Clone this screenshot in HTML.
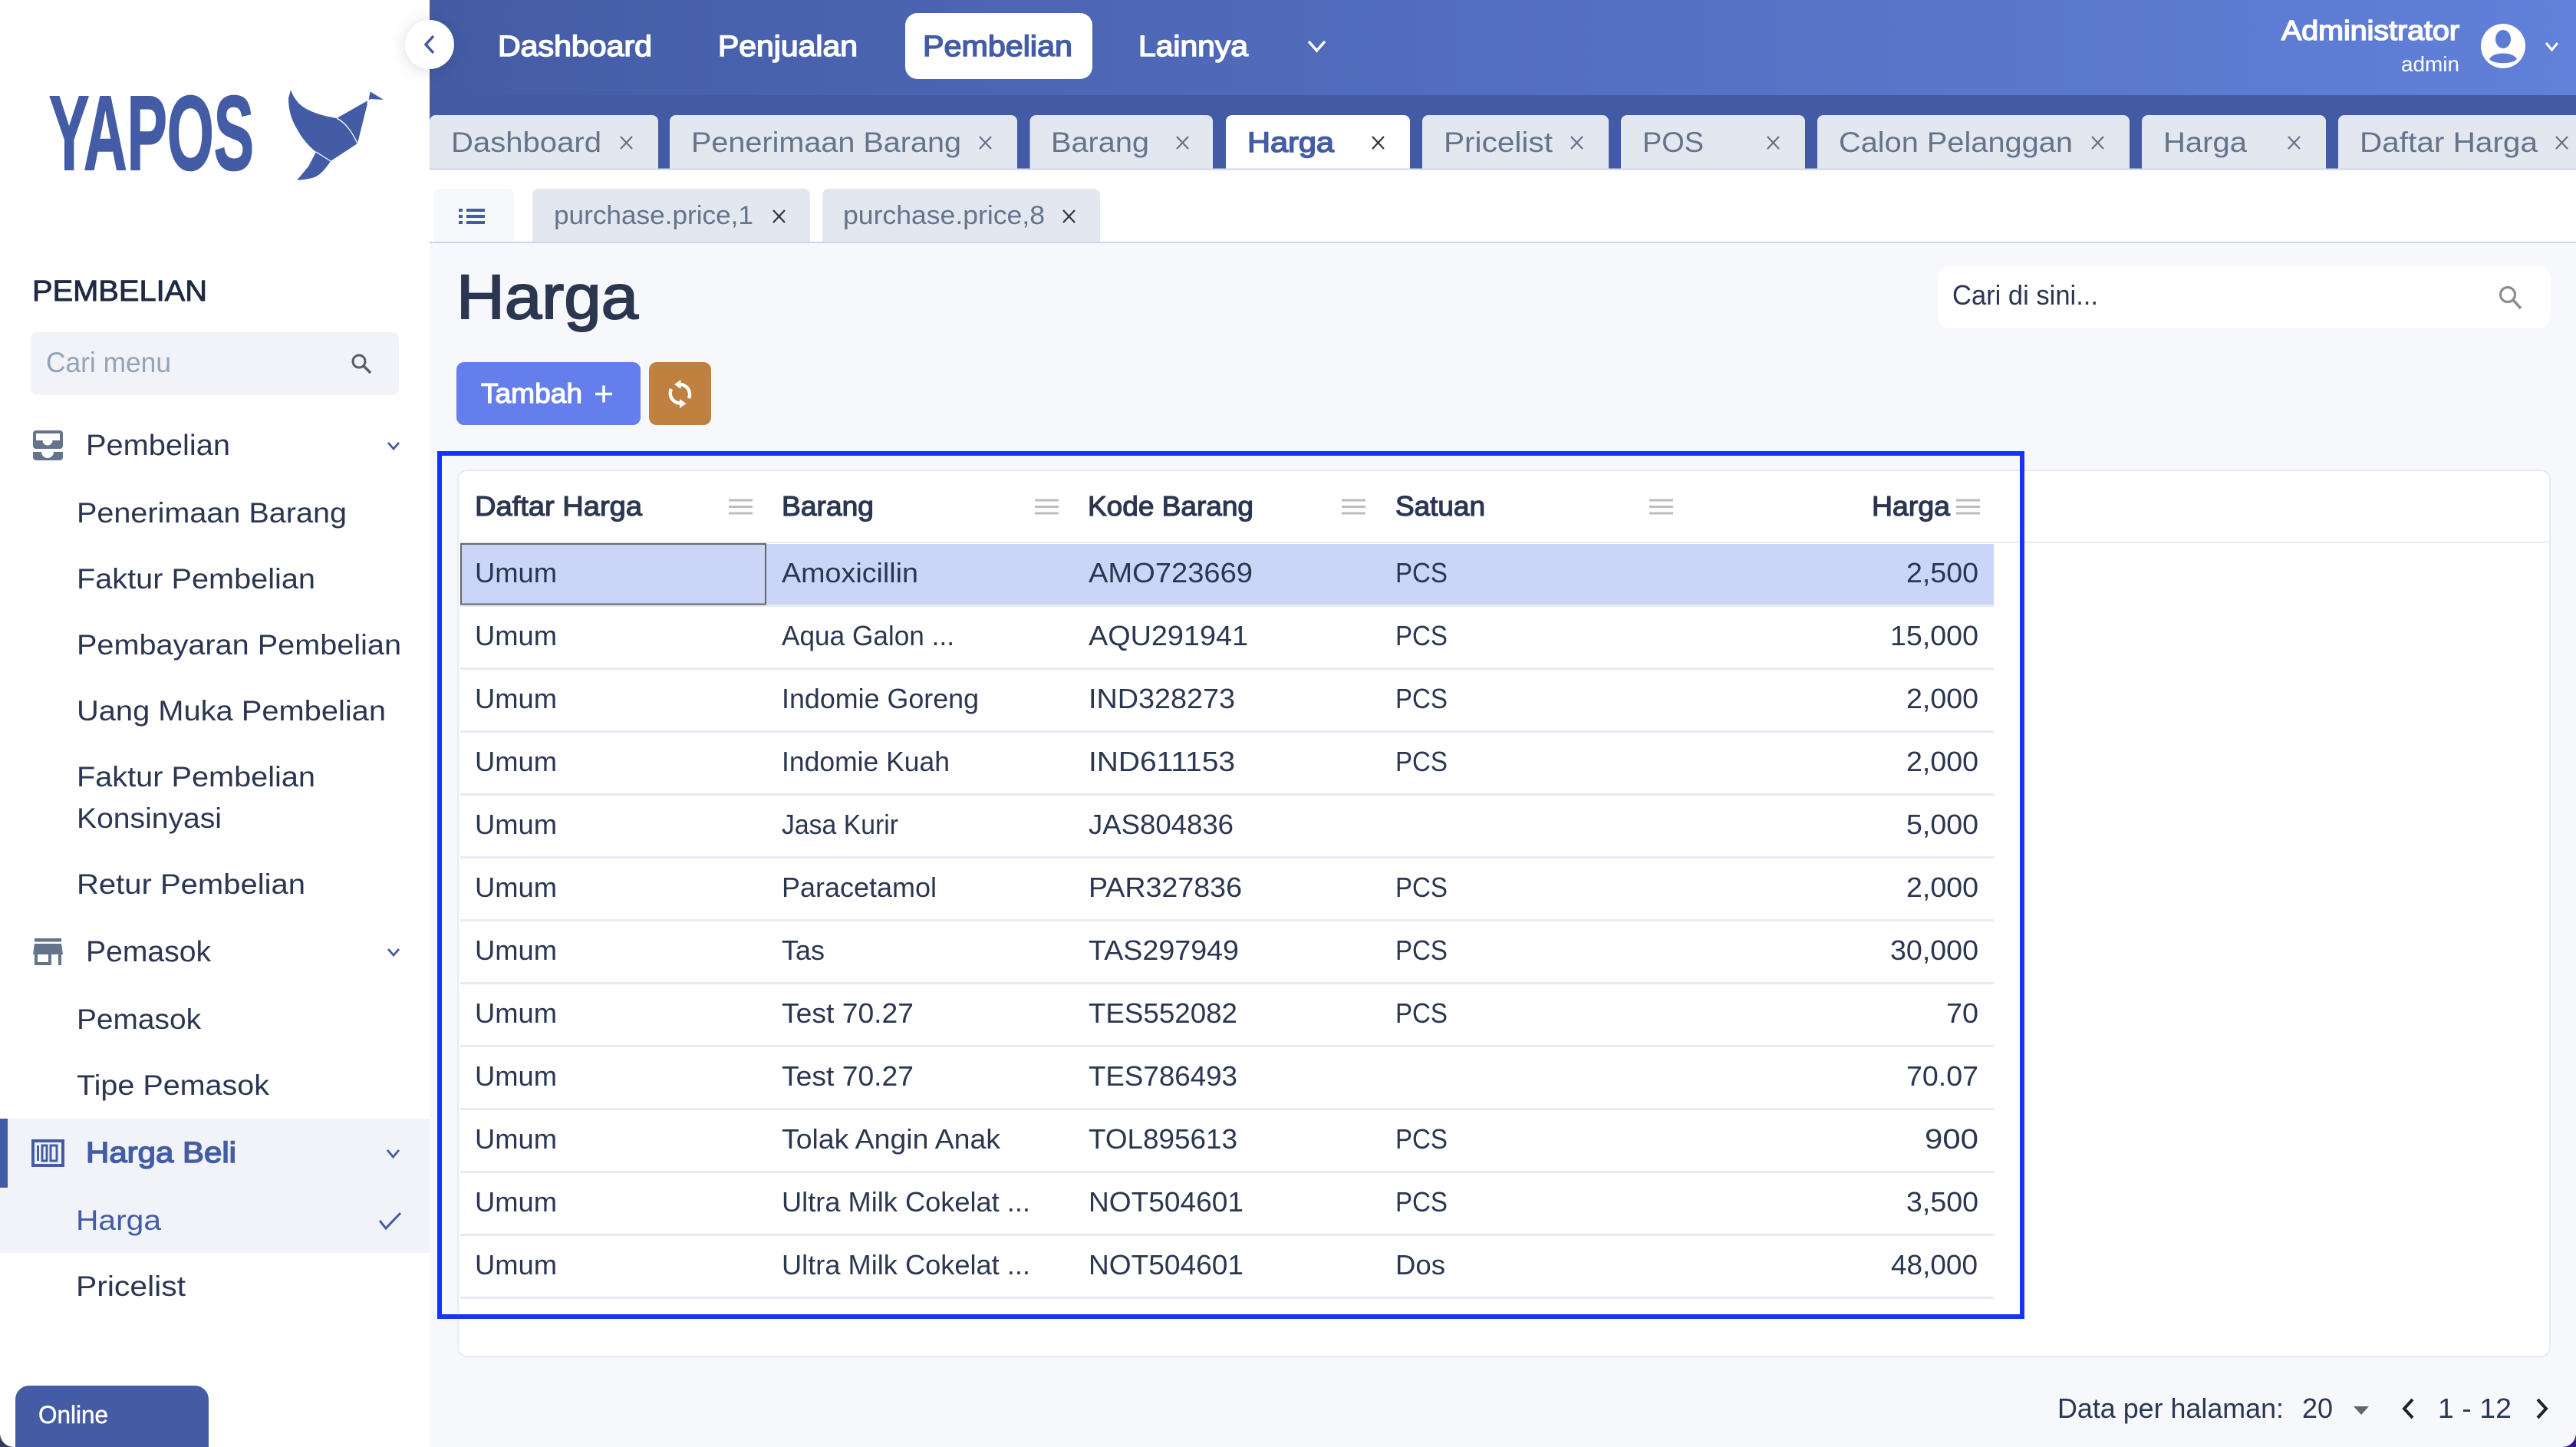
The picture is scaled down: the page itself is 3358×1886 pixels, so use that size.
<!DOCTYPE html>
<html><head><meta charset="utf-8"><title>Harga</title>
<style>
html,body{margin:0;padding:0;background:#f6f8fc;width:3358px;height:1886px;overflow:hidden}
svg{display:block}
text{font-family:"Liberation Sans",sans-serif;white-space:pre}
.b{font-size:36px;fill:#2b3650}
.h{font-size:36px;fill:#2b3650;stroke:#2b3650;stroke-width:1.200px}
.m{font-size:37px;fill:#2b3650}
.t{font-size:37px;fill:#64748b}
.s{font-size:34px;fill:#64748b}
.n{font-size:38px;fill:#fff;stroke:#fff;stroke-width:1.500px}
.a{fill:#435ca5;stroke:#435ca5;stroke-width:1.500px}
</style></head>
<body>
<svg xmlns="http://www.w3.org/2000/svg" width="3358" height="1886" viewBox="0 0 3358 1886">
<defs>
<linearGradient id="g" x1="560" y1="0" x2="3358" y2="0" gradientUnits="userSpaceOnUse"><stop offset="0" stop-color="#445ca5"/><stop offset="1" stop-color="#6180d9"/></linearGradient>
<path id="x" d="M0 0L15 16M15 0L0 16" fill="none" stroke-width="2.200"/>
<path id="c" d="M0 0L31 0M0 8.500L31 8.500M0 17L31 17" fill="none" stroke="#bdbdbd" stroke-width="3"/>
</defs>

<rect width="3358" height="1886" fill="#f6f8fc"/>

<!-- top bar -->
<rect x="560" y="0" width="2798" height="124" fill="url(#g)"/>
<rect x="560" y="124" width="2798" height="96" fill="#435ba4"/>

<text x="649" y="73" class="n" textLength="201" lengthAdjust="spacingAndGlyphs">Dashboard</text>
<text x="936" y="73" class="n" textLength="182" lengthAdjust="spacingAndGlyphs">Penjualan</text>
<rect x="1180" y="17" width="244" height="86" rx="16" fill="#fff"/>
<text x="1203" y="73" style="font-size:38px" class="a" textLength="195" lengthAdjust="spacingAndGlyphs">Pembelian</text>
<text x="1484" y="73" class="n" textLength="143" lengthAdjust="spacingAndGlyphs">Lainnya</text>
<path d="M1706 54L1716.500 66L1727 54" fill="none" stroke="#fff" stroke-width="3.500"/>

<text x="2974" y="52" class="n" style="font-size:36px" textLength="232" lengthAdjust="spacingAndGlyphs">Administrator</text>
<text x="3130" y="93" style="font-size:28px" fill="#fff" textLength="76" lengthAdjust="spacingAndGlyphs">admin</text>
<circle cx="3263" cy="60" r="29" fill="#fff"/>
<ellipse cx="3263" cy="51" rx="10" ry="12" fill="#5e7bd3"/>
<path d="M3245 77C3250 67 3276 67 3281 77C3276 84 3250 84 3245 77Z" fill="#5e7bd3"/>
<path d="M3319 56L3326.500 65L3334 56" fill="none" stroke="#fff" stroke-width="3"/>

<!-- tabs -->
<g fill="#e2e7f0">
<rect x="560" y="150" width="298" height="80" rx="8"/>
<rect x="873" y="150" width="453" height="80" rx="8"/>
<rect x="1342.500" y="150" width="238.500" height="80" rx="8"/>
<rect x="1598" y="150" width="240" height="80" rx="8" fill="#fff"/>
<rect x="1854" y="150" width="243" height="80" rx="8"/>
<rect x="2113" y="150" width="240" height="80" rx="8"/>
<rect x="2369" y="150" width="407" height="80" rx="8"/>
<rect x="2792" y="150" width="240" height="80" rx="8"/>
<rect x="3048" y="150" width="330" height="80" rx="8"/>
</g>
<g class="t">
<text x="588" y="198" class="t" textLength="196" lengthAdjust="spacingAndGlyphs">Dashboard</text>
<text x="901" y="198" class="t" textLength="352" lengthAdjust="spacingAndGlyphs">Penerimaan Barang</text>
<text x="1370" y="198" class="t" textLength="128" lengthAdjust="spacingAndGlyphs">Barang</text>
<text x="1626" y="198" style="font-size:37px" class="a" textLength="113" lengthAdjust="spacingAndGlyphs">Harga</text>
<text x="1882" y="198" class="t" textLength="142" lengthAdjust="spacingAndGlyphs">Pricelist</text>
<text x="2141" y="198" class="t" textLength="80" lengthAdjust="spacingAndGlyphs">POS</text>
<text x="2397" y="198" class="t" textLength="305" lengthAdjust="spacingAndGlyphs">Calon Pelanggan</text>
<text x="2820" y="198" class="t" textLength="109" lengthAdjust="spacingAndGlyphs">Harga</text>
<text x="3076" y="198" class="t" textLength="232" lengthAdjust="spacingAndGlyphs">Daftar Harga</text>
</g>
<g stroke="#64748b">
<use href="#x" x="809" y="178"/>
<use href="#x" x="1277" y="178"/>
<use href="#x" x="1534" y="178"/>
<use href="#x" x="1789" y="178" stroke="#2f3542"/>
<use href="#x" x="2048" y="178"/>
<use href="#x" x="2304" y="178"/>
<use href="#x" x="2727" y="178"/>
<use href="#x" x="2983" y="178"/>
<use href="#x" x="3332" y="178"/>
</g>

<!-- second row -->
<rect x="560" y="220" width="2798" height="96" fill="#fff"/>
<rect x="560" y="219.500" width="2798" height="2" fill="#cdd6ea"/>
<rect x="565" y="246" width="105" height="80" rx="8" fill="#f6f8fc"/>
<rect x="694" y="246" width="362" height="80" rx="8" fill="#e2e7f0"/>
<rect x="1072" y="246" width="362" height="80" rx="8" fill="#e2e7f0"/>
<rect x="560" y="316" width="2798" height="1570" fill="#f6f8fc"/>
<rect x="560" y="315" width="2798" height="2" fill="#cdd6ea"/>
<g fill="#435ca5">
<rect x="598" y="272" width="5" height="4"/><rect x="608" y="272" width="24" height="4"/>
<rect x="598" y="280" width="5" height="4"/><rect x="608" y="280" width="24" height="4"/>
<rect x="598" y="288" width="5" height="4"/><rect x="608" y="288" width="24" height="4"/>
</g>
<text x="722" y="292" class="s" textLength="260" lengthAdjust="spacingAndGlyphs">purchase.price,1</text>
<text x="1099" y="292" class="s" textLength="263" lengthAdjust="spacingAndGlyphs">purchase.price,8</text>
<g stroke="#2f3542">
<use href="#x" x="1008" y="274"/>
<use href="#x" x="1386" y="274"/>
</g>

<!-- title and buttons -->
<text x="595" y="415" style="font-size:82px" fill="#2b3650" stroke="#2b3650" stroke-width="2" textLength="237" lengthAdjust="spacingAndGlyphs">Harga</text>
<rect x="2526" y="347" width="799" height="81" rx="16" fill="#fff"/>
<text x="2545" y="397" class="b" textLength="190" lengthAdjust="spacingAndGlyphs">Cari di sini...</text>
<circle cx="3269" cy="384" r="9.500" fill="none" stroke="#8c8c8c" stroke-width="3.200"/>
<path d="M3276 391L3286 402" stroke="#8c8c8c" stroke-width="3.600"/>

<rect x="595" y="472" width="240" height="82" rx="10" fill="#647eec"/>
<text x="627" y="525" style="font-size:36px" fill="#fff" stroke="#fff" stroke-width="1.200" textLength="132" lengthAdjust="spacingAndGlyphs">Tambah</text>
<path d="M776 513.500H798M787 502.500V524.500" stroke="#fff" stroke-width="3.600"/>
<rect x="846" y="472" width="81" height="82" rx="10" fill="#c08040"/>
<g fill="none" stroke="#fff" stroke-width="4.500">
<path d="M886 501A13 13 0 0 1 898 519"/>
<path d="M887 525.500A13 13 0 0 1 875 507"/>
</g>
<path d="M879 501L887.500 495V507Z M894.500 526L886 520V532Z" fill="#fff"/>

<!-- card -->
<rect x="597" y="613" width="2727" height="1155" rx="12" fill="#fff" stroke="#e8ebf3" stroke-width="2"/>
<rect x="597" y="706" width="2727" height="2" fill="#e8ebf3"/>
<text x="619" y="672" class="h" textLength="218" lengthAdjust="spacingAndGlyphs">Daftar Harga</text>
<text x="1019" y="672" class="h" textLength="120" lengthAdjust="spacingAndGlyphs">Barang</text>
<text x="1418" y="672" class="h" textLength="216" lengthAdjust="spacingAndGlyphs">Kode Barang</text>
<text x="1819" y="672" class="h" textLength="117" lengthAdjust="spacingAndGlyphs">Satuan</text>
<text x="2440" y="672" class="h" textLength="102" lengthAdjust="spacingAndGlyphs">Harga</text>
<use href="#c" x="950" y="652"/><use href="#c" x="1349" y="652"/><use href="#c" x="1749" y="652"/><use href="#c" x="2150" y="652"/><use href="#c" x="2550" y="652"/>

<rect x="600" y="709" width="1999" height="79" fill="#cbd5f7"/>
<g fill="#e8ebf3">
<rect x="600" y="788" width="1999" height="3"/>
<rect x="600" y="870" width="1999" height="3"/>
<rect x="600" y="952" width="1999" height="3"/>
<rect x="600" y="1034" width="1999" height="3"/>
<rect x="600" y="1116" width="1999" height="3"/>
<rect x="600" y="1198" width="1999" height="3"/>
<rect x="600" y="1280" width="1999" height="3"/>
<rect x="600" y="1362" width="1999" height="3"/>
<rect x="600" y="1444" width="1999" height="3"/>
<rect x="600" y="1526" width="1999" height="3"/>
<rect x="600" y="1608" width="1999" height="3"/>
<rect x="600" y="1690" width="1999" height="3"/>
</g>
<rect x="601" y="709" width="397" height="78.500" fill="none" stroke="#66676e" stroke-width="2"/>

<!-- rows -->
<text x="619" y="759" class="b" textLength="107" lengthAdjust="spacingAndGlyphs">Umum</text>
<text x="1019" y="759" class="b" textLength="178" lengthAdjust="spacingAndGlyphs">Amoxicillin</text>
<text x="1419" y="759" class="b" textLength="214" lengthAdjust="spacingAndGlyphs">AMO723669</text>
<text x="1819" y="759" class="b" textLength="68" lengthAdjust="spacingAndGlyphs">PCS</text>
<text x="2485" y="759" class="b" textLength="94" lengthAdjust="spacingAndGlyphs">2,500</text>

<text x="619" y="841" class="b" textLength="107" lengthAdjust="spacingAndGlyphs">Umum</text>
<text x="1019" y="841" class="b" textLength="225" lengthAdjust="spacingAndGlyphs">Aqua Galon ...</text>
<text x="1419" y="841" class="b" textLength="208" lengthAdjust="spacingAndGlyphs">AQU291941</text>
<text x="1819" y="841" class="b" textLength="68" lengthAdjust="spacingAndGlyphs">PCS</text>
<text x="2464" y="841" class="b" textLength="115" lengthAdjust="spacingAndGlyphs">15,000</text>

<text x="619" y="923" class="b" textLength="107" lengthAdjust="spacingAndGlyphs">Umum</text>
<text x="1019" y="923" class="b" textLength="257" lengthAdjust="spacingAndGlyphs">Indomie Goreng</text>
<text x="1419" y="923" class="b" textLength="191" lengthAdjust="spacingAndGlyphs">IND328273</text>
<text x="1819" y="923" class="b" textLength="68" lengthAdjust="spacingAndGlyphs">PCS</text>
<text x="2485" y="923" class="b" textLength="94" lengthAdjust="spacingAndGlyphs">2,000</text>

<text x="619" y="1005" class="b" textLength="107" lengthAdjust="spacingAndGlyphs">Umum</text>
<text x="1019" y="1005" class="b" textLength="219" lengthAdjust="spacingAndGlyphs">Indomie Kuah</text>
<text x="1419" y="1005" class="b" textLength="191" lengthAdjust="spacingAndGlyphs">IND611153</text>
<text x="1819" y="1005" class="b" textLength="68" lengthAdjust="spacingAndGlyphs">PCS</text>
<text x="2485" y="1005" class="b" textLength="94" lengthAdjust="spacingAndGlyphs">2,000</text>

<text x="619" y="1087" class="b" textLength="107" lengthAdjust="spacingAndGlyphs">Umum</text>
<text x="1019" y="1087" class="b" textLength="152" lengthAdjust="spacingAndGlyphs">Jasa Kurir</text>
<text x="1419" y="1087" class="b" textLength="189" lengthAdjust="spacingAndGlyphs">JAS804836</text>
<text x="2485" y="1087" class="b" textLength="94" lengthAdjust="spacingAndGlyphs">5,000</text>

<text x="619" y="1169" class="b" textLength="107" lengthAdjust="spacingAndGlyphs">Umum</text>
<text x="1019" y="1169" class="b" textLength="202" lengthAdjust="spacingAndGlyphs">Paracetamol</text>
<text x="1419" y="1169" class="b" textLength="200" lengthAdjust="spacingAndGlyphs">PAR327836</text>
<text x="1819" y="1169" class="b" textLength="68" lengthAdjust="spacingAndGlyphs">PCS</text>
<text x="2485" y="1169" class="b" textLength="94" lengthAdjust="spacingAndGlyphs">2,000</text>

<text x="619" y="1251" class="b" textLength="107" lengthAdjust="spacingAndGlyphs">Umum</text>
<text x="1019" y="1251" class="b" textLength="56" lengthAdjust="spacingAndGlyphs">Tas</text>
<text x="1419" y="1251" class="b" textLength="196" lengthAdjust="spacingAndGlyphs">TAS297949</text>
<text x="1819" y="1251" class="b" textLength="68" lengthAdjust="spacingAndGlyphs">PCS</text>
<text x="2464" y="1251" class="b" textLength="115" lengthAdjust="spacingAndGlyphs">30,000</text>

<text x="619" y="1333" class="b" textLength="107" lengthAdjust="spacingAndGlyphs">Umum</text>
<text x="1019" y="1333" class="b" textLength="172" lengthAdjust="spacingAndGlyphs">Test 70.27</text>
<text x="1419" y="1333" class="b" textLength="194" lengthAdjust="spacingAndGlyphs">TES552082</text>
<text x="1819" y="1333" class="b" textLength="68" lengthAdjust="spacingAndGlyphs">PCS</text>
<text x="2537" y="1333" class="b" textLength="42" lengthAdjust="spacingAndGlyphs">70</text>

<text x="619" y="1415" class="b" textLength="107" lengthAdjust="spacingAndGlyphs">Umum</text>
<text x="1019" y="1415" class="b" textLength="172" lengthAdjust="spacingAndGlyphs">Test 70.27</text>
<text x="1419" y="1415" class="b" textLength="194" lengthAdjust="spacingAndGlyphs">TES786493</text>
<text x="2485" y="1415" class="b" textLength="94" lengthAdjust="spacingAndGlyphs">70.07</text>

<text x="619" y="1497" class="b" textLength="107" lengthAdjust="spacingAndGlyphs">Umum</text>
<text x="1019" y="1497" class="b" textLength="285" lengthAdjust="spacingAndGlyphs">Tolak Angin Anak</text>
<text x="1419" y="1497" class="b" textLength="194" lengthAdjust="spacingAndGlyphs">TOL895613</text>
<text x="1819" y="1497" class="b" textLength="68" lengthAdjust="spacingAndGlyphs">PCS</text>
<text x="2509" y="1497" class="b" textLength="70" lengthAdjust="spacingAndGlyphs">900</text>

<text x="619" y="1579" class="b" textLength="107" lengthAdjust="spacingAndGlyphs">Umum</text>
<text x="1019" y="1579" class="b" textLength="324" lengthAdjust="spacingAndGlyphs">Ultra Milk Cokelat ...</text>
<text x="1419" y="1579" class="b" textLength="202" lengthAdjust="spacingAndGlyphs">NOT504601</text>
<text x="1819" y="1579" class="b" textLength="68" lengthAdjust="spacingAndGlyphs">PCS</text>
<text x="2485" y="1579" class="b" textLength="94" lengthAdjust="spacingAndGlyphs">3,500</text>

<text x="619" y="1661" class="b" textLength="107" lengthAdjust="spacingAndGlyphs">Umum</text>
<text x="1019" y="1661" class="b" textLength="324" lengthAdjust="spacingAndGlyphs">Ultra Milk Cokelat ...</text>
<text x="1419" y="1661" class="b" textLength="202" lengthAdjust="spacingAndGlyphs">NOT504601</text>
<text x="1819" y="1661" class="b" textLength="65" lengthAdjust="spacingAndGlyphs">Dos</text>
<text x="2465" y="1661" class="b" textLength="113" lengthAdjust="spacingAndGlyphs">48,000</text>

<!-- highlight rectangle -->
<rect x="573" y="591" width="2063" height="1125" fill="none" stroke="#1434f8" stroke-width="6"/>

<!-- pagination -->
<text x="2682" y="1848" class="b" textLength="295" lengthAdjust="spacingAndGlyphs">Data per halaman:</text>
<text x="3001" y="1848" class="b" textLength="40" lengthAdjust="spacingAndGlyphs">20</text>
<path d="M3068 1833H3088L3078 1844Z" fill="#666"/>
<path d="M3145 1824L3134 1836L3145 1848" fill="none" stroke="#222" stroke-width="4"/>
<text x="3178" y="1848" class="b" textLength="96" lengthAdjust="spacingAndGlyphs">1 - 12</text>
<path d="M3308 1824L3319 1836L3308 1848" fill="none" stroke="#222" stroke-width="4"/>

<!-- sidebar -->
<rect x="0" y="0" width="560" height="1886" fill="#fff"/>
<circle cx="560" cy="58" r="32" fill="#fff" style="filter:drop-shadow(0 2px 10px rgba(0,0,0,.14))"/>
<path d="M565 47L555 58L565 69" fill="none" stroke="#435ca5" stroke-width="3.500"/>

<!-- logo -->
<text x="64" y="221" style="font-size:138px;font-weight:bold" fill="#435ca5" stroke="#435ca5" stroke-width="2" textLength="267" lengthAdjust="spacingAndGlyphs">YAPOS</text>
<path d="M379 117L376 128C376 145 381 158 387 168C394 181 403 191 412 198L402 217L387 235C397 234 404 233 410 231C417 228 423 222 431 210L466 187L479 135L482 119L500 130L483 129L439 154C425 152 399 146 388 133C384 128 381 123 379 117Z" fill="#435ca5"/>
<path d="M439 154C450 160 458 170 466 187M412 198L431 210M479 135L482 119" fill="none" stroke="#fff" stroke-width="1.300"/>

<text x="42" y="392" style="font-size:38px" fill="#1f2a44" stroke="#1f2a44" stroke-width=".9" textLength="228" lengthAdjust="spacingAndGlyphs">PEMBELIAN</text>
<rect x="40" y="433" width="480" height="82" rx="8" fill="#f1f3f8"/>
<text x="60" y="485" class="m" style="fill:#94a3b8" textLength="163" lengthAdjust="spacingAndGlyphs">Cari menu</text>
<circle cx="468" cy="471" r="8" fill="none" stroke="#555c68" stroke-width="3"/>
<path d="M474 477L483 486" stroke="#555c68" stroke-width="3.400"/>

<!-- inbox icon -->
<path fill-rule="evenodd" fill="#64748b" d="M47 561H78A4 4 0 0 1 82 565V581A4 4 0 0 1 78 585H47A4 4 0 0 1 43 581V565A4 4 0 0 1 47 561ZM47 565V574H55.500A6.500 6.500 0 0 0 68.500 574H78V565Z"/>
<path fill="#64748b" d="M43 589H54A8 8 0 0 0 70 589H82V596A4 4 0 0 1 78 600H47A4 4 0 0 1 43 596Z"/>
<text x="112" y="593" class="m" style="font-size:38px" textLength="188" lengthAdjust="spacingAndGlyphs">Pembelian</text>
<path d="M506 577L513 585L520 577" fill="none" stroke="#435ca5" stroke-width="2.800"/>

<text x="100" y="681" class="m" textLength="352" lengthAdjust="spacingAndGlyphs">Penerimaan Barang</text>
<text x="100" y="767" class="m" textLength="311" lengthAdjust="spacingAndGlyphs">Faktur Pembelian</text>
<text x="100" y="853" class="m" textLength="423" lengthAdjust="spacingAndGlyphs">Pembayaran Pembelian</text>
<text x="100" y="939" class="m" textLength="403" lengthAdjust="spacingAndGlyphs">Uang Muka Pembelian</text>
<text x="100" y="1025" class="m" textLength="311" lengthAdjust="spacingAndGlyphs">Faktur Pembelian</text>
<text x="100" y="1079" class="m" textLength="189" lengthAdjust="spacingAndGlyphs">Konsinyasi</text>
<text x="100" y="1165" class="m" textLength="298" lengthAdjust="spacingAndGlyphs">Retur Pembelian</text>

<!-- store icon -->
<g fill="#64748b">
<rect x="45" y="1223" width="35" height="4.500"/>
<path d="M45 1230H80L82 1244H43Z"/>
<path fill-rule="evenodd" d="M45 1244H67V1258H45ZM49 1244V1254H63V1244Z"/>
<rect x="76" y="1244" width="4" height="14"/>
</g>
<text x="112" y="1253" class="m" style="font-size:38px" textLength="163" lengthAdjust="spacingAndGlyphs">Pemasok</text>
<path d="M506 1237L513 1245L520 1237" fill="none" stroke="#435ca5" stroke-width="2.800"/>
<text x="100" y="1341" class="m" textLength="162" lengthAdjust="spacingAndGlyphs">Pemasok</text>
<text x="100" y="1427" class="m" textLength="251" lengthAdjust="spacingAndGlyphs">Tipe Pemasok</text>

<rect x="0" y="1458" width="560" height="175" fill="#f1f3f9"/>
<rect x="0" y="1458" width="10" height="90" fill="#425ba4"/>
<rect x="43" y="1487" width="39" height="32" fill="none" stroke="#435ca5" stroke-width="4"/>
<path d="M49.500 1493V1513M55 1493H61V1513H55ZM66 1493H74V1513H66Z" fill="none" stroke="#435ca5" stroke-width="3"/>
<text x="112" y="1515" style="font-size:38px" class="a" textLength="196" lengthAdjust="spacingAndGlyphs">Harga Beli</text>
<path d="M505 1499L512.500 1508L520 1499" fill="none" stroke="#435ca5" stroke-width="2.800"/>
<text x="99" y="1603" class="m" style="fill:#435ca5" textLength="111" lengthAdjust="spacingAndGlyphs">Harga</text>
<path d="M495 1591L503 1601L522 1581" fill="none" stroke="#435ca5" stroke-width="3"/>
<text x="99" y="1689" class="m" textLength="143" lengthAdjust="spacingAndGlyphs">Pricelist</text>

<!-- online -->
<path d="M20 1886V1824A18 18 0 0 1 38 1806H254A18 18 0 0 1 272 1824V1886Z" fill="#445ca5"/>
<text x="50" y="1855" style="font-size:32px" fill="#fff" stroke="#fff" stroke-width=".5" textLength="91" lengthAdjust="spacingAndGlyphs">Online</text>

<!-- window corners -->
<path d="M0 1868A18 18 0 0 0 18 1886H0Z" fill="#3a3a5c"/>
<path d="M3358 1868A18 18 0 0 1 3340 1886H3358Z" fill="#3a1a8a"/>
</svg>
</body></html>
